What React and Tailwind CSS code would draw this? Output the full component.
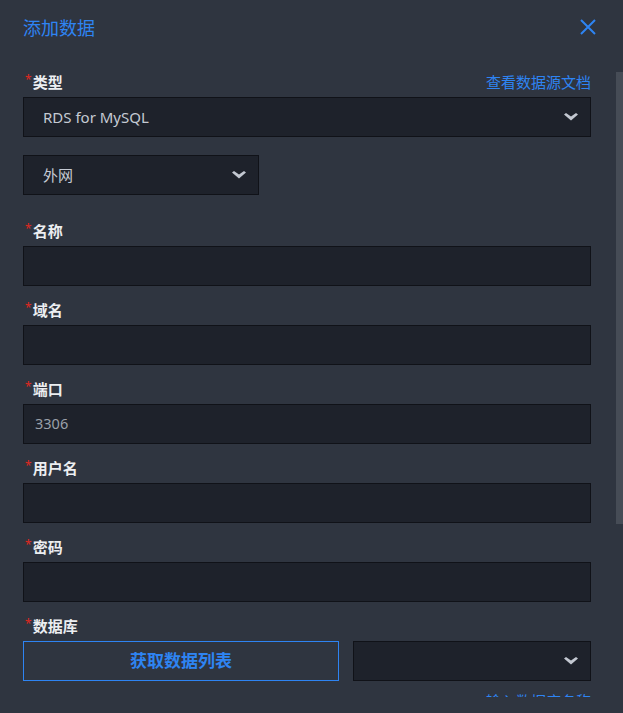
const Chevron = () => (
  <svg width="14" height="8" viewBox="0 0 14 8" className="shrink-0">
    <polygon points="0,1.5 2,0 7,3.5 12,0 14,1.5 7,7.5" fill="#c3c8d1" />
  </svg>
)

function Label({ text, right }) {
  return (
    <div className="flex items-center justify-between h-5 mb-[5px]">
      <div className="flex items-start text-[15px] font-semibold text-[#eceef1] leading-5">
        <span className="text-[#e0281f] text-[12px] leading-3 mt-[2px] ml-[2px] mr-[1px] font-normal">*</span>
        {text}
      </div>
      {right && <a className="text-[15px] text-[#2e84f3] leading-5" href="#">{right}</a>}
    </div>
  )
}

function Select({ value, className = "", textClass = "" }) {
  return (
    <div className={"h-10 bg-[#1e222b] border border-[#101218] flex items-center justify-between pl-[19px] pr-[12px] " + className}>
      <span className={"text-[15px] text-[#c5cad3] " + textClass}>{value}</span>
      <Chevron />
    </div>
  )
}

function Input({ value }) {
  return (
    <div className="h-10 bg-[#1e222b] border border-[#101218] flex items-center px-[11px] text-[14.5px] text-[#9aa0a9]">
      {value}
    </div>
  )
}

function Field({ label, value }) {
  return (
    <div className="mb-[14px]">
      <Label text={label} />
      <Input value={value} />
    </div>
  )
}

export default function App() {
  return (
    <div className="w-[623px] h-[713px] bg-[#2f3540] flex flex-col overflow-hidden" style={{ fontFamily: '"Noto Sans", "Noto Sans CJK SC", sans-serif' }}>
      <div className="h-[72px] shrink-0 flex items-start justify-between pl-[23px] pr-[27px] pt-[16px]">
        <h2 className="text-[18px] leading-6 text-[#2e84f3]">添加数据</h2>
        <svg width="16" height="16" viewBox="0 0 16 16" className="mt-[3px]">
          <path d="M1 1 L15 15 M15 1 L1 15" stroke="#2e84f3" strokeWidth="2" />
        </svg>
      </div>

      <div className="relative h-[625px] overflow-hidden shrink-0">
        <div className="absolute right-0 top-0 w-[7px] h-[452px] bg-[#464c56]" />
        <div className="pl-[23px] pr-[32px]">
          <Label text="类型" right="查看数据源文档" />
          <Select value="RDS for MySQL" className="mt-[2px]" />
          <Select value="外网" className="w-[236px] mt-[18px] mb-[26px]" textClass="text-[#a9aeb7]" />
          <Field label="名称" />
          <Field label="域名" />
          <Field label="端口" value="3306" />
          <Field label="用户名" />
          <Field label="密码" />
          <div className="mb-[10px]">
            <Label text="数据库" />
            <div className="flex gap-[14px]">
              <button className="w-[316px] h-10 border border-[#2e84f3] text-[#2e84f3] text-[17px] font-bold">获取数据列表</button>
              <Select value="" className="flex-1" />
            </div>
          </div>
          <div className="flex justify-end">
            <a className="text-[15px] text-[#2e84f3] leading-5" href="#">输入数据库名称</a>
          </div>
        </div>
      </div>
    </div>
  )
}
